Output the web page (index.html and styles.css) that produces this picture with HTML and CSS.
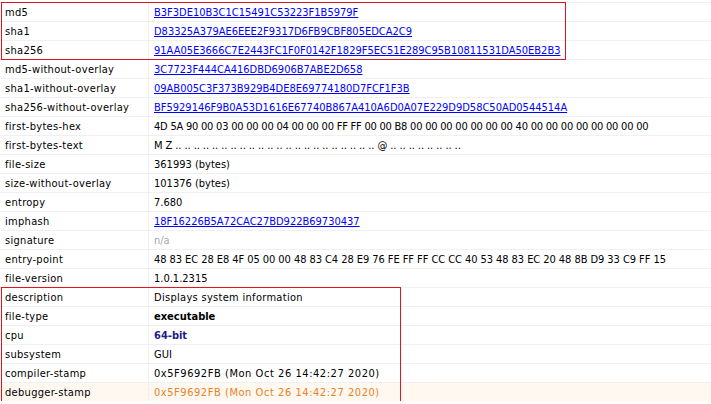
FILE: index.html
```html
<!DOCTYPE html>
<html>
<head>
<meta charset="utf-8">
<link rel="stylesheet" href="styles.css">
</head>
<body>
<div class="props">
  <div class="group group-hash">
    <div class="row"><div class="k">md5</div><div class="v"><a class="lnk">B3F3DE10B3C1C15491C53223F1B5979F</a></div></div>
    <div class="row"><div class="k">sha1</div><div class="v"><a class="lnk">D83325A379AE6EEE2F9317D6FB9CBF805EDCA2C9</a></div></div>
    <div class="row"><div class="k">sha256</div><div class="v"><a class="lnk">91AA05E3666C7E2443FC1F0F0142F1829F5EC51E289C95B10811531DA50EB2B3</a></div></div>
    <div class="box box-hash"></div>
  </div>
  <div class="row"><div class="k">md5-without-overlay</div><div class="v"><a class="lnk">3C7723F444CA416DBD6906B7ABE2D658</a></div></div>
  <div class="row"><div class="k">sha1-without-overlay</div><div class="v"><a class="lnk">09AB005C3F373B929B4DE8E69774180D7FCF1F3B</a></div></div>
  <div class="row"><div class="k">sha256-without-overlay</div><div class="v"><a class="lnk">BF5929146F9B0A53D1616E67740B867A410A6D0A07E229D9D58C50AD0544514A</a></div></div>
  <div class="row"><div class="k">first-bytes-hex</div><div class="v bytes-zero">4D 5A 90 00 03 00 00 00 04 00 00 00 FF FF 00 00 B8 00 00 00 00 00 00 00 40 00 00 00 00 00 00 00 00</div></div>
  <div class="row"><div class="k">first-bytes-text</div><div class="v bytes-text">M Z .. .. .. .. .. .. .. .. .. .. .. .. .. .. .. .. .. .. .. .. .. .. @ .. .. .. .. .. .. .. ..</div></div>
  <div class="row"><div class="k">file-size</div><div class="v">361993 (bytes)</div></div>
  <div class="row"><div class="k">size-without-overlay</div><div class="v">101376 (bytes)</div></div>
  <div class="row"><div class="k">entropy</div><div class="v">7.680</div></div>
  <div class="row"><div class="k">imphash</div><div class="v"><a class="lnk">18F16226B5A72CAC27BD922B69730437</a></div></div>
  <div class="row"><div class="k">signature</div><div class="v muted">n/a</div></div>
  <div class="row"><div class="k">entry-point</div><div class="v bytes-code">48 83 EC 28 E8 4F 05 00 00 48 83 C4 28 E9 76 FE FF FF CC CC 40 53 48 83 EC 20 48 8B D9 33 C9 FF 15</div></div>
  <div class="row"><div class="k">file-version</div><div class="v">1.0.1.2315</div></div>
  <div class="group group-info">
    <div class="row"><div class="k">description</div><div class="v prose">Displays system information</div></div>
    <div class="row"><div class="k">file-type</div><div class="v strong">executable</div></div>
    <div class="row"><div class="k">cpu</div><div class="v strong navy">64-bit</div></div>
    <div class="row"><div class="k">subsystem</div><div class="v">GUI</div></div>
    <div class="row"><div class="k">compiler-stamp</div><div class="v stamp">0x5F9692FB (Mon Oct 26 14:42:27 2020)</div></div>
    <div class="row row-warn"><div class="k">debugger-stamp</div><div class="v stamp warn">0x5F9692FB (Mon Oct 26 14:42:27 2020)</div></div>
    <div class="box box-info"></div>
  </div>
</div>
</body>
</html>
```
FILE: styles.css
```css
html, body {
  margin: 0;
  padding: 0;
  background: #ffffff;
}
body {
  font-family: "DejaVu Sans Condensed", "DejaVu Sans", sans-serif;
  font-stretch: condensed;
  font-size: 11px;
  color: #000000;
  overflow: hidden;
}
.props {
  padding-top: 2px;
}
.group {
  position: relative;
}
.row {
  display: grid;
  grid-template-columns: 149px 1fr;
  height: 19px;
  box-sizing: border-box;
  border-top: 1px solid #f0f0f0;
}
.k, .v {
  display: flex;
  align-items: center;
  white-space: nowrap;
  overflow: hidden;
}
.k {
  padding-left: 5px;
  border-right: 1px solid #f0f0f0;
  letter-spacing: 0.3px;
}
.v {
  padding-left: 5px;
}
.lnk {
  color: #0000ff;
  text-decoration: underline;
}
.bytes-zero {
  letter-spacing: -0.22px;
}
.bytes-code {
  letter-spacing: -0.06px;
}
.bytes-text {
  letter-spacing: -0.08px;
}
.prose {
  letter-spacing: 0.3px;
}
.stamp {
  letter-spacing: 0.55px;
}
.muted {
  color: #a8a8a8;
}
.strong {
  font-weight: bold;
}
.navy {
  color: #1c1c8c;
}
.row-warn {
  background: #fff8f1;
}
.warn {
  color: #e8821e;
}
.box {
  position: absolute;
  top: 0;
  left: 1px;
  bottom: -1px;
  border: 1px solid #e4141f;
  pointer-events: none;
}
.box-hash {
  width: 563px;
}
.box-info {
  width: 398px;
}
```
